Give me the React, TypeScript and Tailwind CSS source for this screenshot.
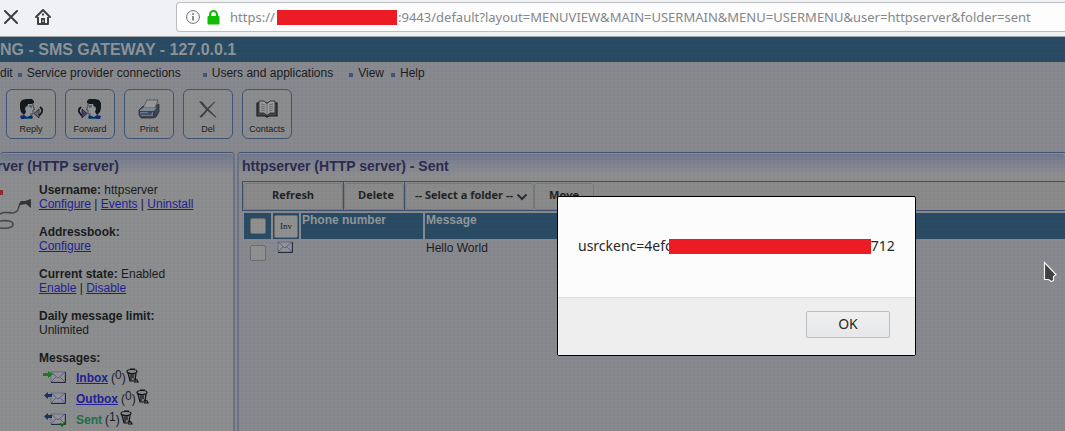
import React from "react";

const tools = [
  { label: "Reply", icon: <ReplyIcon /> },
  { label: "Forward", icon: <ForwardIcon /> },
  { label: "Print", icon: <PrintIcon /> },
  { label: "Del", icon: <DelIcon /> },
  { label: "Contacts", icon: <BookIcon /> },
];

function Head() {
  return (
    <>
      <path d="M6 5h7l1 3 1 3-1 1v4h-4l-1 3H4l1-5z" fill="#8f9597" />
      <path d="M1 4l2-3 4-1h6l2 2v2l-2 1H9L8 8 7 7 6 10l1 3-2 3-3-3-1-4z" fill="#14191d" />
      <path d="M14 5v2l1.500 3.500-1.500.5v4h-3" fill="none" stroke="#30363b" strokeWidth=".8" />
      <path d="M10 7h3M12 8v1" stroke="#2a2f6c" />
      <path d="M1 17l4-1 3 2 5-2 1 3-2 1H2z" fill="#181f80" />
      <path d="M5 19h7v1H5z" fill="#125a66" />
    </>
  );
}

function ReplyIcon() {
  return (
    <svg width="24" height="21" viewBox="0 0 24 21">
      <Head />
      <path d="M21 8l2 2v3l-3 4" fill="none" stroke="#14171a" strokeWidth="1.800" />
      <path d="M15 14.500l5-4.500v9z" fill="#6d6478" stroke="#22252a" strokeWidth=".8" />
    </svg>
  );
}

function ForwardIcon() {
  return (
    <svg width="24" height="21" viewBox="0 0 24 21">
      <g transform="translate(24 0) scale(-1 1)">
        <Head />
      </g>
      <path d="M3 8l-2 2v3l3 4" fill="none" stroke="#14171a" strokeWidth="1.800" />
      <path d="M9 14.500L4 10v9z" fill="#4a3d74" stroke="#22252a" strokeWidth=".8" />
    </svg>
  );
}

function PrintIcon() {
  return (
    <svg width="22" height="20" viewBox="0 0 22 20">
      <path d="M1 11l4-4h12l4-2v8l-3 5-3 1H3l-2-3z" fill="#3c4552" stroke="#2a3039" strokeWidth=".8" />
      <path d="M5 9l4-8h11l-3 8z" fill="#96989b" stroke="#4a4f56" strokeWidth=".8" />
      <path d="M2 11l3-2h12l2-1-3 4H2z" fill="#7c8795" />
      <path d="M2 13h13v4H3z" fill="#68758a" />
      <path d="M3 15h10M16 12v6" stroke="#2c3444" />
      <path d="M10 13h4v2h-4z" fill="#3d4a78" />
    </svg>
  );
}

function DelIcon() {
  return (
    <svg width="20" height="19" viewBox="0 0 20 19">
      <path
        d="M1 1.500l3 0 5 6 9.500 9.500-.7.700L8 9.500 3 4zM16.500 1.500l.7.600L10 10l-4 5-3 3-1.500-1.500L6 12l3-3.500z"
        fill="#3f4143"
      />
    </svg>
  );
}

function BookIcon() {
  return (
    <svg width="22" height="18" viewBox="0 0 22 18">
      <path d="M1 3v13h8l2 1 2-1h8V3z" fill="#45474a" stroke="#1b1d1f" strokeWidth="1.200" />
      <path d="M3 1h5l3 2.500L14 1h5v12h-5l-3 2.500L8 13H3z" fill="#9b9c9d" stroke="#2b2d30" strokeWidth=".9" />
      <path
        d="M11 3v12M5 4l4 1M5 6l4 1M5 8l4 1M5 10l4 1M17 4l-4 1M17 6l-4 1M17 8l-4 1M17 10l-4 1"
        stroke="#55575a"
        strokeWidth=".7"
      />
    </svg>
  );
}

function Envelope() {
  return (
    <>
      <path d="M1 1h14v10H1z" fill="#919397" stroke="#62667a" strokeWidth=".8" />
      <path d="M1 1l7 6 7-6M1 11l5-5M15 11l-5-5" fill="none" stroke="#4d528a" strokeWidth=".8" />
      <path d="M1 11.500h14.500V1" fill="none" stroke="#282b36" />
    </>
  );
}

function MailIcon({ kind }: { kind: "in" | "out" | "sent" }) {
  return (
    <svg width="24" height="15" viewBox="0 0 24 15">
      <g transform="translate(7 1)">
        <Envelope />
      </g>
      {kind === "in" ? (
        <path d="M0 3h5V1l5 3.500L5 8V6H0z" fill="#1f7a26" />
      ) : (
        <path d="M1 4.500L5 1v2h4v3H5v2z" fill="#1c2f66" />
      )}
      {kind === "sent" && <path d="M17 11l2 3 4-5" fill="none" stroke="#12691a" strokeWidth="1.600" />}
    </svg>
  );
}

function TrashIcon() {
  return (
    <svg width="13" height="15" viewBox="0 0 13 15">
      <path d="M2 5h8l-1 8H4z" fill="#7b7d80" stroke="#121315" strokeWidth="1.200" />
      <ellipse cx="6" cy="3.500" rx="5" ry="2" fill="#8a8c8e" stroke="#121315" strokeWidth="1.200" />
      <path d="M4 1.200h5M5 6v6M7 6v4M8 11l3 1 1 2H8" fill="none" stroke="#121315" strokeWidth="1.200" />
    </svg>
  );
}

function Cable() {
  return (
    <svg width="33" height="50" viewBox="0 0 33 50" className="block">
      <path d="M0 9h3v5H0z" fill="#8d2b2c" />
      <path d="M0 33c4-3 8-1 13-1 8-1 4-9 9-11h4" fill="none" stroke="#46484b" strokeWidth="1.600" />
      <path d="M0 40c7-1 13 0 13 3.500 0 3-6 4.500-13 3.500" fill="none" stroke="#46484b" strokeWidth="1.600" />
      <path d="M19 23l2-3h4l6-2v9l-5-4-5 1z" fill="#333538" />
    </svg>
  );
}

const link = "text-[#221f96] underline";

function Folder({ kind, label, count }: { kind: "in" | "out" | "sent"; label: string; count: number }) {
  return (
    <li className="flex h-[21px] items-center">
      <span className="ml-1 w-[33px]">
        <MailIcon kind={kind} />
      </span>
      {kind === "sent" ? (
        <b className="text-[#1c704a]">{label}</b>
      ) : (
        <a href="#" className={`${link} font-bold`}>
          {label}
        </a>
      )}
      <span className="ml-[3px]">
        (<span className="relative -top-[3px]">{count}</span>)
      </span>
      <button aria-label={`Empty ${label}`} className="mb-1">
        <TrashIcon />
      </button>
    </li>
  );
}

const frame = "border-t border-[#46546f] rounded-t-[4px]";
const inner =
  "mt-px bg-linear-to-b from-[#6f788d] via-[#828590] via-40% to-[#8c8d8f] to-80% h-[27px] pt-[2px] rounded-t-[4px] text-sm leading-5 font-bold text-[#2d2b4e]";
const bar =
  "rounded-[3px] border border-[#77797b] bg-[#898a89] h-[27px] pb-[2px] text-[11px] font-bold font-['Open_Sans','Noto_Sans',sans-serif] text-[#222426]";
const dot = "mr-[5px] mt-1 size-1 bg-[#40577d]";
const box = "block size-4 appearance-none rounded-[2px] border border-[#6b6c6e] bg-[#8f9091]";

export default function App() {
  return (
    <div className="relative h-screen overflow-hidden bg-[#88898f] font-['Liberation_Sans',Arial,sans-serif] text-xs leading-[14px] text-[#1b1c1e]">
      <header className="flex h-[37px] items-center border-b border-[#a5a6a7] bg-[#f0f1f4] pb-[2px]">
        <button aria-label="Stop" className="ml-1 w-[14px]">
          <svg width="14" height="14" viewBox="0 0 14 14">
            <path d="M1 1l12 12M13 1L1 13" stroke="#3f4043" strokeWidth="2" strokeLinecap="round" />
          </svg>
        </button>
        <button aria-label="Home" className="ml-[17px]">
          <svg width="16" height="16" viewBox="0 0 16 16" fill="none" stroke="#3f4043" strokeWidth="2">
            <path d="M1 8l7-7 7 7" strokeLinecap="round" strokeLinejoin="round" />
            <path d="M3 8v7h10V8" strokeLinejoin="round" />
            <path d="M6 9h4v6H6z" fill="#3f4043" stroke="none" />
            <path d="M8 4.500v2" />
            <path d="M8 11v2" stroke="#f0f1f4" strokeWidth="1" />
          </svg>
        </button>
        <div className="ml-[125px] flex h-[30px] flex-1 items-center rounded-l-[4px] border border-r-0 border-[#bcbdbe] bg-[#fdfdfd] pl-[9px]">
          <svg width="14" height="14" viewBox="0 0 14 14" fill="none" stroke="#6e6f71">
            <circle cx="7" cy="7" r="6.400" />
            <path d="M7 6v4.500M7 3.300v1.600" strokeWidth="1.600" />
          </svg>
          <svg width="13" height="15" viewBox="0 0 13 15" className="ml-[7px]">
            <path d="M3 7V4.500a3.400 3.400 0 0 1 7 0V7" fill="none" stroke="#12bc00" strokeWidth="2" />
            <rect x=".5" y="6" width="12" height="8.500" rx="1" fill="#12bc00" />
          </svg>
          <div className="ml-[10px] flex items-center whitespace-nowrap font-['Noto_Sans',sans-serif] text-[13px] leading-5 text-[#85878a]">
            <span className="w-[47px]">https://</span>
            <span className="mr-px h-[15px] w-[120px] bg-[#ed1c24]" />
            :9443/default?layout=MENUVIEW&amp;MAIN=USERMAIN&amp;MENU=USERMENU&amp;user=httpserver&amp;folder=sent
          </div>
        </div>
      </header>

      <h1 className="flex h-[25px] items-center bg-[#294b64] text-base font-bold text-[#8e9396]">NG - SMS GATEWAY - 127.0.0.1</h1>

      <nav className="flex h-[23px] items-center pb-[2px]">
        <a href="#">dit</a>
        <i className={`${dot} ml-[5px]`} />
        <a href="#">Service provider connections</a>
        <i className={`${dot} ml-[22px]`} />
        <a href="#">Users and applications</a>
        <i className={`${dot} ml-4`} />
        <a href="#">View</a>
        <i className={`${dot} ml-[7px]`} />
        <a href="#">Help</a>
      </nav>

      <div className="flex gap-[9px] pl-[6px] pt-1">
        {tools.map((t) => (
          <button
            key={t.label}
            className="flex size-[50px] flex-col items-center rounded-[6px] border border-[#415474] bg-[#8b8c8d] pt-2 text-[9px] leading-[11px] text-[#1b1c1e]"
          >
            <span className="flex h-[22px] items-center">{t.icon}</span>
            <span className="mt-1">{t.label}</span>
          </button>
        ))}
      </div>

      <main className="mt-[13px] flex items-stretch gap-[2px]">
        <section className={`${frame} h-[290px] w-[235px] border-r-2 border-r-[#6c7387] bg-[#8b8d8f]`}>
          <h2 className={`${inner} -indent-[3px]`}>rver (HTTP server)</h2>
          <div className="flex">
            <div className="w-[39px]">
              <Cable />
            </div>
            <div className="pt-[2px]">
              <p>
                <b>Username:</b> httpserver
                <br />
                <a href="#" className={link}>Configure</a> | <a href="#" className={link}>Events</a> |{" "}
                <a href="#" className={link}>Uninstall</a>
              </p>
              <p className="mt-[14px]">
                <b>Addressbook:</b>
                <br />
                <a href="#" className={link}>Configure</a>
              </p>
              <p className="mt-[14px]">
                <b>Current state:</b> Enabled
                <br />
                <a href="#" className={link}>Enable</a> | <a href="#" className={link}>Disable</a>
              </p>
              <p className="mt-[14px]">
                <b>Daily message limit:</b>
                <br />
                Unlimited
              </p>
              <p className="mt-[14px]">
                <b>Messages:</b>
              </p>
              <ul className="mt-[2px]">
                <Folder kind="in" label="Inbox" count={0} />
                <Folder kind="out" label="Outbox" count={0} />
                <Folder kind="sent" label="Sent" count={1} />
              </ul>
            </div>
          </div>
        </section>

        <section className={`${frame} flex-1 rounded-tr-none border-l-2 border-l-[#6c7387]`}>
          <h2 className={`${inner} pl-[3px]`}>httpserver (HTTP server) - Sent</h2>
          <div className="ml-[3px] flex h-[30px] items-center border-y border-l border-[#3f4f70] bg-[#898a89]">
            <button className={`${bar} w-[100px]`}>Refresh</button>
            <span className="h-full w-px bg-[#3f4f70]" />
            <button className={`${bar} w-[60px] pl-1`}>Delete</button>
            <span className="h-full w-px bg-[#3f4f70]" />
            <div className="relative">
              <select aria-label="Folder" className={`${bar} block w-[129px] appearance-none pl-[9px]`}>
                <option>-- Select a folder --</option>
              </select>
              <svg width="12" height="8" viewBox="0 0 12 8" className="pointer-events-none absolute right-[6px] top-[10px]">
                <path d="M1.500 1.500L6 6l4.500-4.500" fill="none" stroke="#2b2d2f" strokeWidth="2" />
              </svg>
            </div>
            <button className={`${bar} w-[60px]`}>Move</button>
          </div>
          <table className="ml-[3px] w-full border-separate border-spacing-[2px] text-left">
            <thead>
              <tr className="h-[26px] text-[#929699]">
                <th className="w-[27px] bg-[#294b64] p-0 pl-[6px]">
                  <input type="checkbox" aria-label="Select all" className={box} />
                </th>
                <th className="w-[26px] bg-[#294b64] p-0 pl-px">
                  <button className="block h-[23px] w-[24px] rounded-[2px] border border-[#6b6c6e] bg-[#8f9091] font-['Liberation_Serif',serif] text-[9px] font-normal text-[#1b1c1e]">
                    Inv
                  </button>
                </th>
                <th className="w-[122px] bg-[#294b64] p-0 pl-px align-top">Phone number</th>
                <th className="bg-[#294b64] p-0 pl-px align-top">Message</th>
              </tr>
            </thead>
            <tbody>
              <tr>
                <td className="p-0 pl-[6px] pt-1">
                  <input type="checkbox" aria-label="Select message" className={box} />
                </td>
                <td className="p-0 pl-[4px] align-top">
                  <svg width="17" height="13" viewBox="0 0 17 13">
                    <Envelope />
                  </svg>
                </td>
                <td />
                <td className="p-0 pl-px align-top">Hello World</td>
              </tr>
            </tbody>
          </table>
        </section>
      </main>

      <div className="pointer-events-none absolute inset-x-0 bottom-0 top-[37px] bg-[radial-gradient(#00000008_1px,transparent_1px)] bg-size-[4px_4px]" />

      <div
        role="dialog"
        aria-label="Message"
        className="absolute left-[557px] top-[196px] flex h-[160px] w-[359px] flex-col rounded-[2px] border border-black bg-[#fcfcfc] font-['Noto_Sans',sans-serif] text-[14px] leading-5 text-[#26282a]"
      >
        <div className="flex flex-1 items-center pb-[2px] pl-5">
          usrckenc=4efc
          <span className="relative -ml-[3px] h-[15px] w-[202px] bg-[#ed1c24]" />
          712
        </div>
        <div className="flex h-[58px] justify-end border-t border-[#dcdddd] bg-[#eeeeee] pr-[25px] pt-[13px]">
          <button className="h-[27px] w-[84px] rounded-[2px] border border-[#bcbdbe] bg-linear-to-b from-[#f0f0f0] to-[#e6e7e9] pb-[2px]">OK</button>
        </div>
      </div>

      <svg width="14" height="22" viewBox="0 0 14 22" className="pointer-events-none absolute left-[1043px] top-[261px]">
        <path d="M1.500 1.500v17h4l3 2 2-1v-4l2.500-2z" fill="#3f4142" stroke="#f4f4f4" strokeWidth="1.200" />
      </svg>
    </div>
  );
}
